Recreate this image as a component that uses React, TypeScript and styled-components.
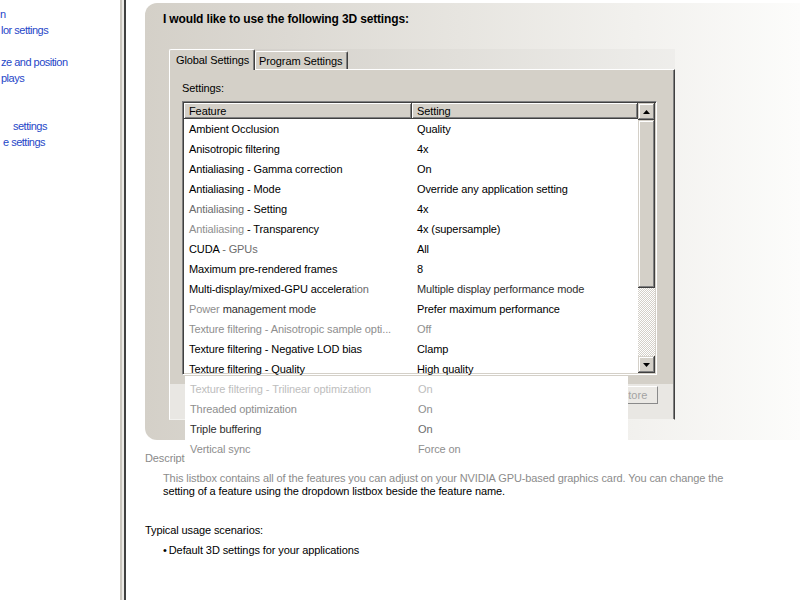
import React from 'react';
import styled, { createGlobalStyle } from 'styled-components';

type Tone = 'dark' | 'soft' | 'mid' | 'light' | 'faint';
type Seg = [string, Tone?];

type FeatureRow = {
  feature: Seg[];
  setting: Seg[];
};

const toneColor: Record<Tone, string> = {
  dark: '#000000',
  soft: '#2e2e2e',
  mid: '#6c6c6c',
  light: '#8e8e8e',
  faint: '#bdbdbd',
};

const navItems: { text: string; shift: number }[] = [
  { text: 'n', shift: 0 },
  { text: 'lor settings', shift: 1 },
  { text: '', shift: 0 },
  { text: 'ze and position', shift: 1 },
  { text: 'plays', shift: 1 },
  { text: '', shift: 0 },
  { text: '', shift: 0 },
  { text: 'settings', shift: 13 },
  { text: 'e settings', shift: 3 },
];

const visibleRows: FeatureRow[] = [
  { feature: [['Ambient Occlusion']], setting: [['Quality']] },
  { feature: [['Anisotropic filtering']], setting: [['4x']] },
  { feature: [['Antialiasing - Gamma correction']], setting: [['On']] },
  { feature: [['Antialiasing - Mode']], setting: [['Override any application setting']] },
  { feature: [['Antialiasing', 'mid'], [' - Setting']], setting: [['4x']] },
  { feature: [['Antialiasing', 'light'], [' - Transparency']], setting: [['4x (supersample)']] },
  { feature: [['CUDA'], [' - GPUs', 'mid']], setting: [['All']] },
  { feature: [['Maximum pre-rendered frames']], setting: [['8']] },
  { feature: [['Multi-display/mixed-GPU accelera'], ['tion', 'mid']], setting: [['Multiple display performance mode', 'soft']] },
  { feature: [['Power', 'light'], [' management mode', 'soft']], setting: [['Prefer maximum performance']] },
  { feature: [['Texture filtering - Anisotropic sample opti...', 'light']], setting: [['Off', 'light']] },
  { feature: [['Texture filtering - Negative LOD bias']], setting: [['Clamp']] },
  { feature: [['Texture filtering - Quality']], setting: [['High quality']] },
];

// rows that spill out under the list frame in the screenshot
const spilledRows: FeatureRow[] = [
  { feature: [['Texture filtering - Trilinear optimization', 'faint']], setting: [['On', 'faint']] },
  { feature: [['Threaded optimization', 'light']], setting: [['On', 'light']] },
  { feature: [['Triple buffering', 'soft']], setting: [['On', 'mid']] },
  { feature: [['Vertical sync', 'light']], setting: [['Force on', 'light']] },
];

function Segments({ parts }: { parts: Seg[] }) {
  return (
    <>
      {parts.map(([text, tone], i) => (
        <Part key={i} $tone={tone || 'dark'}>
          {text}
        </Part>
      ))}
    </>
  );
}

function ArrowIcon({ down }: { down?: boolean }) {
  return (
    <svg width="7" height="4" viewBox="0 0 7 4">
      <polygon points={down ? '0,0 7,0 3.5,4' : '0,4 7,4 3.5,0'} fill="#000" />
    </svg>
  );
}

function App() {
  return (
    <>
      <GlobalStyle />
      <Window>
        <Sidebar>
          {navItems.map((item, i) => (
            <NavLink key={i} $shift={item.shift}>
              {item.text}
            </NavLink>
          ))}
        </Sidebar>
        <Splitter />
        <Main>
          <Panel>
            <Heading>I would like to use the following 3D settings:</Heading>
            <TabArea>
              <TabStrip>
                <Tab $active>Global Settings</Tab>
                <Tab>Program Settings</Tab>
              </TabStrip>
              <TabBody>
                <FieldLabel>Settings:</FieldLabel>
                <ListBox>
                  <ListHeader>
                    <HeaderCell>Feature</HeaderCell>
                    <HeaderCell>Setting</HeaderCell>
                  </ListHeader>
                  <ListRows>
                    {visibleRows.map((row, i) => (
                      <Row key={i}>
                        <Cell>
                          <Segments parts={row.feature} />
                        </Cell>
                        <Cell>
                          <Segments parts={row.setting} />
                        </Cell>
                      </Row>
                    ))}
                  </ListRows>
                  <ScrollBar>
                    <ScrollButton>
                      <ArrowIcon />
                    </ScrollButton>
                    <ScrollThumb />
                    <ScrollTrack />
                    <ScrollButton>
                      <ArrowIcon down />
                    </ScrollButton>
                  </ScrollBar>
                  <Spill>
                    {spilledRows.map((row, i) => (
                      <Row key={i}>
                        <Cell>
                          <Segments parts={row.feature} />
                        </Cell>
                        <Cell>
                          <Segments parts={row.setting} />
                        </Cell>
                      </Row>
                    ))}
                  </Spill>
                </ListBox>
                <Footer>
                  <RestoreButton disabled>Restore</RestoreButton>
                </Footer>
              </TabBody>
            </TabArea>
          </Panel>
          <DescLabel>Description:</DescLabel>
          <DescText>
            <DescLine $faded>
              This listbox contains all of the features you can adjust on your NVIDIA GPU-based graphics card. You can change the
            </DescLine>
            <DescLine>setting of a feature using the dropdown listbox beside the feature name.</DescLine>
          </DescText>
          <UsageTitle>Typical usage scenarios:</UsageTitle>
          <UsageList>
            <UsageItem>Default 3D settings for your applications</UsageItem>
          </UsageList>
        </Main>
      </Window>
    </>
  );
}

const GlobalStyle = createGlobalStyle`
  html, body {
    margin: 0;
    padding: 0;
    background: #fff;
  }

  body {
    font-family: "Liberation Sans", Arial, sans-serif;
    font-size: 11px;
    letter-spacing: -0.1px;
    color: #000;
  }

  * {
    box-sizing: border-box;
  }
`;

const Window = styled.div`
  display: flex;
  width: 800px;
  height: 600px;
  overflow: hidden;
  background: #fff;
`;

const Sidebar = styled.nav`
  flex: none;
  width: 120px;
  padding-top: 6px;
  overflow: hidden;
`;

const NavLink = styled.div<{ $shift: number }>`
  height: 16px;
  line-height: 16px;
  padding-left: ${(p) => p.$shift}px;
  color: #1f47c8;
  letter-spacing: -0.5px;
  white-space: nowrap;
`;

const Splitter = styled.div`
  flex: none;
  width: 6px;
  height: 100%;
  background: #eceae6;
  border-left: 2px solid #cac6be;
  border-right: 2px solid #404040;
`;

const Main = styled.main`
  flex: 1;
  display: flex;
  flex-direction: column;
  padding-left: 19px;
  min-width: 0;
`;

const Panel = styled.section`
  height: 437px;
  margin-top: 3px;
  padding: 10px 0 0 18px;
  border-radius: 12px 0 0 12px;
  background: linear-gradient(90deg, #d4d0c8 0%, #dcd9d3 22%, #e7e5e0 48%, #f2f1ee 75%, #fcfcfb 100%);
`;

const Heading = styled.h2`
  margin: 0;
  font-size: 12px;
  line-height: 13px;
  font-weight: bold;
  letter-spacing: -0.15px;
`;

const TabArea = styled.div`
  width: 506px;
  margin: 23px 0 0 6px;
`;

const TabStrip = styled.div`
  display: flex;
  align-items: flex-end;
  height: 20px;
  background: rgba(0, 0, 0, 0.025);
`;

const Tab = styled.div<{ $active?: boolean }>`
  position: relative;
  z-index: 1;
  height: ${(p) => (p.$active ? 21 : 18)}px;
  width: ${(p) => (p.$active ? 86 : 93)}px;
  margin-bottom: ${(p) => (p.$active ? -1 : 0)}px;
  padding: ${(p) => (p.$active ? '4px 0 0 6px' : '3px 0 0 3px')};
  line-height: 13px;
  background: #d4d0c8;
  border-top: 1px solid #fff;
  border-left: 1px solid #fff;
  border-right: 1px solid #404040;
  border-radius: 2px 2px 0 0;
  box-shadow: inset -1px 0 #808080;
  white-space: nowrap;
`;

const TabBody = styled.div`
  display: flex;
  flex-direction: column;
  height: 351px;
  padding: 12px 15px 0 12px;
  background: linear-gradient(180deg, #d4d0c8 0, #d4d0c8 314px, #e9e7e3 314px);
  border-top: 1px solid #fff;
  border-left: 1px solid #fff;
  border-right: 1px solid #404040;
  border-bottom: 1px solid #f3f2ef;
  box-shadow: inset -1px 0 #808080;
`;

const FieldLabel = styled.div`
  line-height: 13px;
`;

const ListBox = styled.div`
  position: relative;
  display: grid;
  grid-template-columns: 1fr 17px;
  grid-template-rows: 16px 1fr;
  width: 475px;
  height: 274px;
  margin-top: 6px;
  padding: 1px;
  background: #fff;
  border: 1px solid;
  border-color: #808080 #fff #fff #808080;
  box-shadow: inset 1px 1px #404040, inset -1px -1px #d4d0c8;
`;

const ListHeader = styled.div`
  display: grid;
  grid-template-columns: 228px 1fr;
`;

const HeaderCell = styled.div`
  padding-left: 5px;
  line-height: 16px;
  background: #d4d0c8;
  box-shadow: inset -1px -1px #404040, inset 1px 1px #fff, inset -2px -2px #808080;
`;

const ListRows = styled.div`
  grid-column: 1;
  height: 254px;
`;

const Row = styled.div`
  display: grid;
  grid-template-columns: 228px 1fr;
  height: 20px;
  line-height: 20px;
`;

const Cell = styled.div`
  padding-left: 5px;
  white-space: nowrap;
  overflow: hidden;
`;

const Part = styled.span<{ $tone: Tone }>`
  color: ${(p) => toneColor[p.$tone]};
`;

const ScrollBar = styled.div`
  grid-column: 2;
  grid-row: 1 / span 2;
  display: flex;
  flex-direction: column;
  background: repeating-conic-gradient(#fff 0 25%, #d4d0c8 0 50%) 0 0 / 2px 2px;
`;

const ScrollButton = styled.div`
  flex: none;
  display: flex;
  align-items: center;
  justify-content: center;
  height: 17px;
  background: #d4d0c8;
  box-shadow: inset -1px -1px #404040, inset 1px 1px #d4d0c8, inset -2px -2px #808080, inset 2px 2px #fff;
`;

const ScrollThumb = styled.div`
  flex: none;
  height: 168px;
  background: #d4d0c8;
  box-shadow: inset -1px -1px #404040, inset 1px 1px #d4d0c8, inset -2px -2px #808080, inset 2px 2px #fff;
`;

const ScrollTrack = styled.div`
  flex: 1;
`;

const Spill = styled.div`
  position: absolute;
  z-index: 2;
  top: calc(100% + 2px);
  left: 2px;
  width: 443px;
  height: 89px;
  padding-top: 3px;
  background: #fff;
`;

const Footer = styled.div`
  display: flex;
  justify-content: flex-end;
  width: 476px;
  margin-top: 11px;
`;

const RestoreButton = styled.button`
  width: 60px;
  height: 18px;
  padding: 0;
  font: inherit;
  color: #a3a3a3;
  background: #ebe9e5;
  border: 1px solid;
  border-color: #fff #8a8a8a #8a8a8a #fff;
`;

const DescLabel = styled.div`
  margin-top: 12px;
  line-height: 13px;
  color: #8a8a8a;
`;

const DescText = styled.div`
  margin-top: 7px;
  padding-left: 18px;
`;

const DescLine = styled.div<{ $faded?: boolean }>`
  line-height: 13px;
  white-space: nowrap;
  color: ${(p) => (p.$faded ? '#8c8c8c' : '#000')};
`;

const UsageTitle = styled.div`
  margin-top: 26px;
  line-height: 13px;
`;

const UsageList = styled.ul`
  margin: 7px 0 0;
  padding-left: 18px;
  list-style: none;
`;

const UsageItem = styled.li`
  line-height: 13px;

  &::before {
    content: '•';
    margin-right: 2px;
  }
`;

export default App;
